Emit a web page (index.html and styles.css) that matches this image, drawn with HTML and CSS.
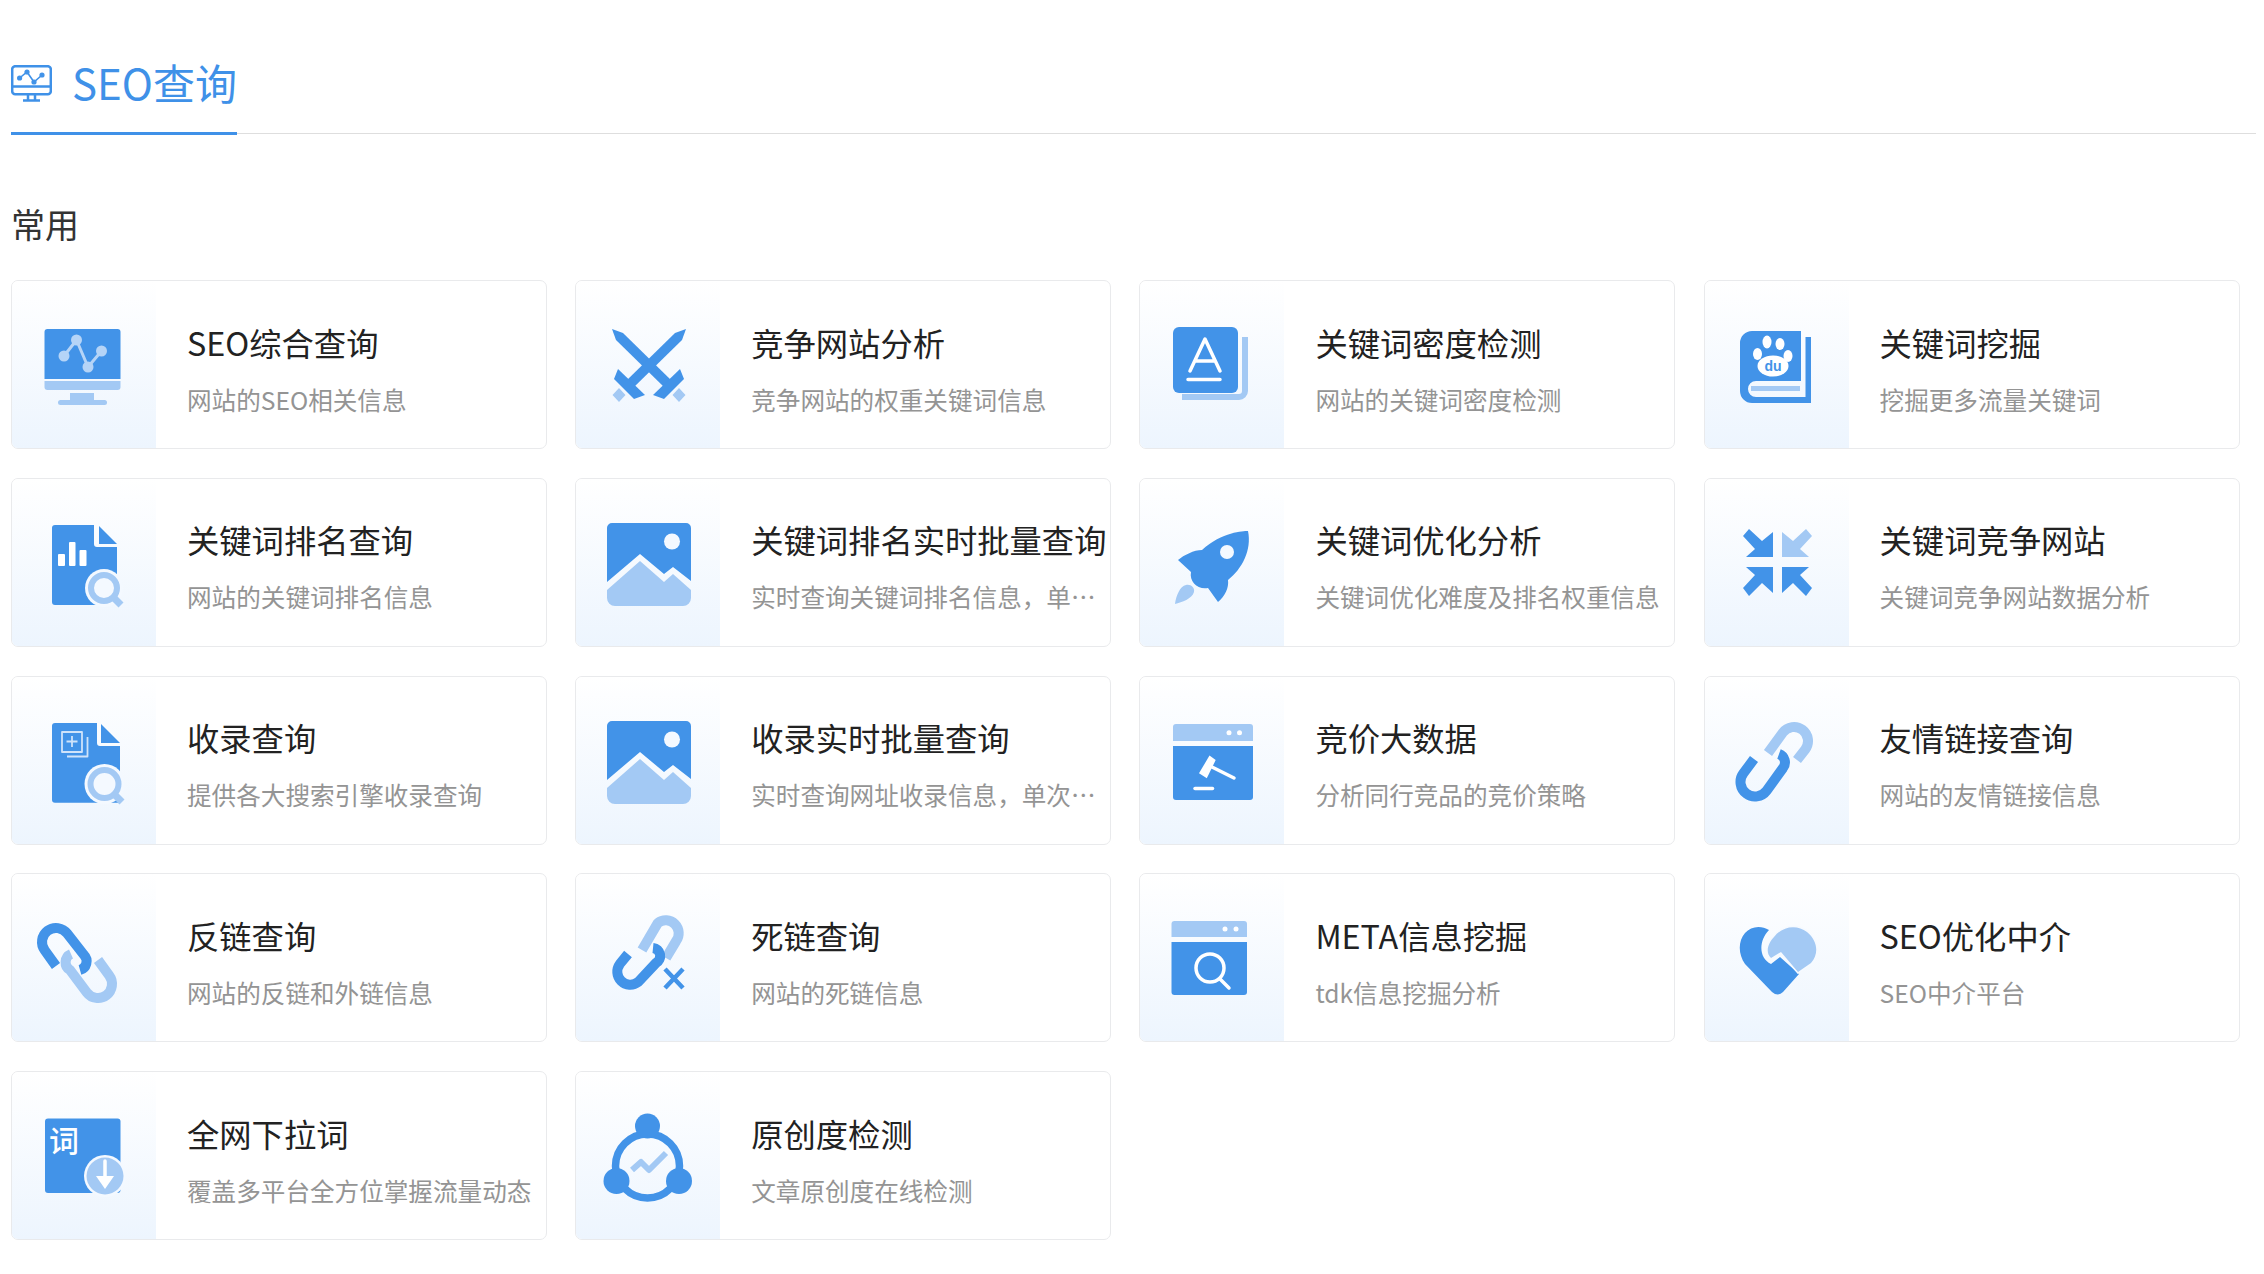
FILE: index.html
```html
<!DOCTYPE html>
<html lang="zh-CN">
<head>
<meta charset="utf-8">
<title>SEO查询</title>
<link rel="stylesheet" href="styles.css">
</head>
<body>
<main class="page">
  <nav class="tabs">
    <a class="tab">
      <svg class="tab-icon" viewBox="0 0 41 37" width="41" height="37">
        <rect x="1.2" y="1.2" width="38.6" height="28" rx="3" class="o"/>
        <path d="M1 21.5H40M17 30v5M24 30v5M12 35.5H29" class="o"/>
        <path d="M8.6 13L16 7L23 17L31 10" class="o thin"/>
        <circle cx="8.6" cy="13" r="2.6" class="b"/><circle cx="16" cy="7" r="2.6" class="b"/><circle cx="23" cy="17" r="2.6" class="b"/><circle cx="31" cy="10" r="2.6" class="b"/>
      </svg>
      <span>SEO查询</span>
    </a>
  </nav>
  <h2 class="section">常用</h2>
  <section class="grid">

    <article class="card">
      <div class="pic"><svg viewBox="0 0 100 100" class="ic">
        <path d="M10.5 17a3 3 0 0 1 3-3h70a3 3 0 0 1 3 3v47h-76z" class="b"/>
        <path d="M10.5 66h76v6a3 3 0 0 1-3 3h-70a3 3 0 0 1-3-3z" class="l"/>
        <path d="M36 78h24v7h-24z" class="l"/><rect x="24" y="85" width="49" height="5" rx="2.5" class="l"/>
        <path d="M30 41L42.500 25L54 52L67.500 36" class="w-line"/>
        <circle cx="30" cy="41" r="5.500" class="l2"/><circle cx="42.500" cy="25" r="5.500" class="l2"/><circle cx="54" cy="52" r="5.500" class="l2"/><circle cx="67.500" cy="36" r="5.500" class="l2"/>
      </svg></div>
      <div class="text"><h3>SEO综合查询</h3><p>网站的SEO相关信息</p></div>
    </article>

    <article class="card">
      <div class="pic"><svg viewBox="0 0 100 100" class="ic">
        <path d="M14 14L25 18L75 67L68 74L18 25Z" class="b"/>
        <path d="M88 14L77 18L27 67L34 74L84 25Z" class="b"/>
        <path d="M82 54L86 64L66 84L55 80Z" class="b"/>
        <path d="M20 54L16 64L36 84L47 80Z" class="b"/>
        <path d="M21 73l6.500 7l-6.500 7l-6.500-7zM81 73l6.500 7l-6.500 7l-6.500-7z" class="l"/>
      </svg></div>
      <div class="text"><h3>竞争网站分析</h3><p>竞争网站的权重关键词信息</p></div>
    </article>

    <article class="card">
      <div class="pic"><svg viewBox="0 0 100 100" class="ic">
        <path d="M83 22V76a6 6 0 0 1-6 6H20" class="s-l" stroke-width="6"/>
        <rect x="11" y="12" width="65" height="66" rx="6" class="b"/>
        <path d="M28 56L43 24L58 56M33 46H53M26 64.500H58" class="s-w"/>
      </svg></div>
      <div class="text"><h3>关键词密度检测</h3><p>网站的关键词密度检测</p></div>
    </article>

    <article class="card">
      <div class="pic"><svg viewBox="0 0 100 100" class="ic">
        <path d="M25 16H74V66H29a6 6 0 0 0 0 16H78.500V22H84V88H25a12 12 0 0 1-12-12V28a12 12 0 0 1 12-12Z" class="b"/>
        <path d="M24 71H73V76H24Z" class="l"/>
        <ellipse cx="40" cy="27" rx="4.500" ry="6.500" class="w"/><ellipse cx="53" cy="29" rx="4.500" ry="6" class="w"/>
        <ellipse cx="30.500" cy="39" rx="4.500" ry="6" class="w"/><ellipse cx="61" cy="41" rx="4.500" ry="6" class="w"/>
        <ellipse cx="46" cy="51" rx="15.500" ry="10.500" class="w"/>
        <text x="46" y="56" class="du">du</text>
      </svg></div>
      <div class="text"><h3>关键词挖掘</h3><p>挖掘更多流量关键词</p></div>
    </article>

    <article class="card">
      <div class="pic"><svg viewBox="0 0 100 100" class="ic">
        <path d="M18 16a3 3 0 0 1 3-3H60V32a3 3 0 0 0 3 3H83V56H46V93H21a3 3 0 0 1-3-3Z" class="b"/>
        <path d="M46 56H83V62L62 93H46Z" class="b"/>
        <path d="M65 14L83 32H65Z" class="b"/>
        <rect x="24" y="42" width="7" height="12" rx="1" class="w"/><rect x="35" y="30" width="6.500" height="24" rx="1" class="w"/><rect x="45.500" y="38" width="7" height="16" rx="1" class="w"/>
        <circle cx="70" cy="76" r="19" class="halo"/>
        <circle cx="70" cy="76" r="13" class="s-l" stroke-width="6"/>
        <path d="M79 85L87 93" class="s-l" stroke-width="7"/>
      </svg></div>
      <div class="text"><h3>关键词排名查询</h3><p>网站的关键词排名信息</p></div>
    </article>

    <article class="card">
      <div class="pic"><svg viewBox="0 0 100 100" class="ic">
        <path d="M9 16a5 5 0 0 1 5-5h74a5 5 0 0 1 5 5V69L75 55L66 62L42 42L9 70Z" class="b"/>
        <path d="M42 49L66 70L75 62L93 78V86a8 8 0 0 1-8 8H17a8 8 0 0 1-8-8V78Z" class="l"/>
        <circle cx="74" cy="29.500" r="8" class="w2"/>
      </svg></div>
      <div class="text"><h3>关键词排名实时批量查询</h3><p>实时查询关键词排名信息，单次最多查询一百个关键词</p></div>
    </article>

    <article class="card">
      <div class="pic"><svg viewBox="0 0 100 100" class="ic">
        <path d="M86 19C86 19 62 18 40 38C32 38 22 43 16 48L29 60C27 70 36 78 46 76L56 90C63 84 67 76 66 68C80 57 90 38 86 19Z" class="b"/>
        <circle cx="65" cy="40" r="7" class="w2"/>
        <path d="M13 92C14 84 18 74 24 73C29 72 33 76 32 80C30 87 20 90 13 92Z" class="l"/>
      </svg></div>
      <div class="text"><h3>关键词优化分析</h3><p>关键词优化难度及排名权重信息</p></div>
    </article>

    <article class="card">
      <div class="pic"><svg viewBox="0 0 100 100" class="ic">
        <path d="M46 20V45H19L28 37L16 24L22 17L35 29Z" class="b"/>
        <path d="M55 20V45H82L73 37L85 24L79 17L66 29Z" class="l"/>
        <path d="M46 81V55H19L28 63L16 76L22 84L35 71Z" class="b"/>
        <path d="M55 81V55H82L73 63L85 76L79 84L66 71Z" class="b"/>
      </svg></div>
      <div class="text"><h3>关键词竞争网站</h3><p>关键词竞争网站数据分析</p></div>
    </article>

    <article class="card">
      <div class="pic"><svg viewBox="0 0 100 100" class="ic">
        <path d="M18 16a3 3 0 0 1 3-3H63V33a3 3 0 0 0 3 3H86V92.700H21a3 3 0 0 1-3-3Z" class="b"/>
        <path d="M67 14L86 33H67Z" class="b"/>
        <rect x="28" y="22" width="20" height="20" class="thin-w"/>
        <path d="M33 46.500H53.500V27M38 26V37M32.500 31.500H43.500" class="thin-w"/>
        <circle cx="70.500" cy="74" r="20" class="halo"/>
        <circle cx="70.500" cy="74" r="14" class="s-l" stroke-width="6"/>
        <path d="M80 84L88 92" class="s-l" stroke-width="7"/>
      </svg></div>
      <div class="text"><h3>收录查询</h3><p>提供各大搜索引擎收录查询</p></div>
    </article>

    <article class="card">
      <div class="pic"><svg viewBox="0 0 100 100" class="ic">
        <path d="M9 16a5 5 0 0 1 5-5h74a5 5 0 0 1 5 5V69L75 55L66 62L42 42L9 70Z" class="b"/>
        <path d="M42 49L66 70L75 62L93 78V86a8 8 0 0 1-8 8H17a8 8 0 0 1-8-8V78Z" class="l"/>
        <circle cx="74" cy="29.500" r="8" class="w2"/>
      </svg></div>
      <div class="text"><h3>收录实时批量查询</h3><p>实时查询网址收录信息，单次最多查询一百个网址</p></div>
    </article>

    <article class="card">
      <div class="pic"><svg viewBox="0 0 100 100" class="ic">
        <path d="M11 17a3 3 0 0 1 3-3h74a3 3 0 0 1 3 3v14h-80z" class="l"/>
        <circle cx="67" cy="22.700" r="2.500" class="w"/><circle cx="77.500" cy="22.700" r="2.500" class="w"/>
        <path d="M11 36h80v51a3 3 0 0 1-3 3h-74a3 3 0 0 1-3-3z" class="b"/>
        <path d="M47.500 45.500L53.700 50L44.800 68.300L37 63.300Z" class="w"/>
        <path d="M50 57L72 68" class="s-w" stroke-width="4.500"/>
        <path d="M33 78.500H50.500" class="s-w" stroke-width="3"/>
      </svg></div>
      <div class="text"><h3>竞价大数据</h3><p>分析同行竞品的竞价策略</p></div>
    </article>

    <article class="card">
      <div class="pic"><svg viewBox="0 0 100 100" class="ic">
        <path d="M41 43L55.800 22.600A14 14 0 0 1 78.200 39.400L70 50" class="s-l link"/>
        <path d="M27 49L16.400 63.300A14.500 14.500 0 0 0 39.600 80.700L56 58A9 9 0 0 0 52 44" class="s-b link"/>
      </svg></div>
      <div class="text"><h3>友情链接查询</h3><p>网站的友情链接信息</p></div>
    </article>

    <article class="card">
      <div class="pic"><svg viewBox="0 0 100 100" class="ic">
        <path d="M37 46A9 9 0 0 0 36 62L52.800 84.400A14 14 0 0 0 75.200 67.600L64 52" class="s-l link"/>
        <path d="M22 58L10.800 42.400A14 14 0 0 1 33.200 25.600L50 47A9 9 0 0 1 46 62" class="s-b link"/>
      </svg></div>
      <div class="text"><h3>反链查询</h3><p>网站的反链和外链信息</p></div>
    </article>

    <article class="card">
      <div class="pic"><svg viewBox="0 0 100 100" class="ic">
        <path d="M44 42L59.900 14.900A13 13 0 0 1 78.100 33.100L68 50" class="s-l link"/>
        <path d="M30 46L21.900 55.900A13 13 0 0 0 40.100 74.100L58 55A8 8 0 0 0 55 40" class="s-b link"/>
        <path d="M67 61L85 80M85 61L67 80" class="s-b" stroke-width="4.500"/>
      </svg></div>
      <div class="text"><h3>死链查询</h3><p>网站的死链信息</p></div>
    </article>

    <article class="card">
      <div class="pic"><svg viewBox="0 0 100 100" class="ic">
        <path d="M9.500 16a3 3 0 0 1 3-3h69.500a3 3 0 0 1 3 3v13h-75.500z" class="l"/>
        <circle cx="63" cy="21" r="2.500" class="w"/><circle cx="74" cy="21" r="2.500" class="w"/>
        <path d="M9.500 34h75.500v50a3 3 0 0 1-3 3h-69.500a3 3 0 0 1-3-3z" class="b"/>
        <circle cx="48" cy="60" r="14" class="s-w" stroke-width="4"/>
        <path d="M58 71L67 80" class="s-w" stroke-width="5"/>
      </svg></div>
      <div class="text"><h3>META信息挖掘</h3><p>tdk信息挖掘分析</p></div>
    </article>

    <article class="card">
      <div class="pic"><svg viewBox="0 0 100 100" class="ic">
        <path d="M42 22C34 17 24 18 18 25C11 33 11 46 18 56L45 84Q51 89 56 84L72 66L53 49L44 56C31 50 32 32 42 22Z" class="b"/>
        <path d="M47 29C55 18 70 16 80 24C91 33 92 46 84 55L71 64L54 44L44 50C38 45 41 35 47 29Z" class="l heart-gap"/>
      </svg></div>
      <div class="text"><h3>SEO优化中介</h3><p>SEO中介平台</p></div>
    </article>

    <article class="card">
      <div class="pic"><svg viewBox="0 0 100 100" class="ic">
        <rect x="11" y="12.500" width="75.500" height="74.500" rx="3" class="b"/>
        <text x="30" y="46" class="ci">词</text>
        <circle cx="71" cy="70" r="21" class="halo"/>
        <circle cx="71" cy="70" r="18.500" class="l"/>
        <path d="M71 55V75" class="s-w" stroke-width="4"/><path d="M62 70H80L71 83Z" class="w"/>
      </svg></div>
      <div class="text"><h3>全网下拉词</h3><p>覆盖多平台全方位掌握流量动态</p></div>
    </article>

    <article class="card">
      <div class="pic"><svg viewBox="0 0 100 100" class="ic">
        <circle cx="49.500" cy="60" r="32" class="s-b" stroke-width="7.500"/>
        <circle cx="49.500" cy="20" r="12.500" class="b"/>
        <circle cx="18.500" cy="75" r="13" class="b"/>
        <circle cx="81" cy="75" r="13" class="b"/>
        <path d="M34 64L43 56L51 64L68 47" class="s-l" stroke-width="6"/>
      </svg></div>
      <div class="text"><h3>原创度检测</h3><p>文章原创度在线检测</p></div>
    </article>

  </section>
</main>
</body>
</html>
```
FILE: styles.css
```css
* { box-sizing: border-box; }
html, body { margin: 0; background: #fff; }
body { font-family: "Noto Sans CJK SC", "Noto Sans", sans-serif; color: #222; }
.page { padding: 0 8px 0 11px; }

.tabs { display: flex; height: 134px; border-bottom: 1px solid #dedede; }
.tab {
  display: flex; align-items: center; gap: 20px; height: 135px;
  padding: 62px 0 30px; border-bottom: 3px solid #3f91e8;
  color: #3f91e8; font-size: 42px; line-height: 40px;
}
.tab-icon { flex: none; margin-top: 3px; }

.section { margin: 68px 0 34px; font-size: 34px; line-height: 44px; font-weight: 400; color: #333; }

.grid { display: grid; grid-template-columns: repeat(4, 536px); grid-auto-rows: 169px; gap: 28.75px 28.2px; }
.card {
  display: flex; overflow: hidden; background: #fff;
  border: 1px solid #e9eaec; border-radius: 7px;
}
.pic {
  flex: none; width: 144px; display: flex; align-items: center; justify-content: center;
  background: linear-gradient(180deg, #fff 0%, #edf5fe 100%);
}
.ic { width: 100px; height: 100px; display: block; }
.text { flex: 1; min-width: 0; padding: 7px 9px 0 31px; display: flex; flex-direction: column; justify-content: center; }
.text h3 { margin: 0; font-size: 32.3px; line-height: 44px; font-weight: 400; color: #222; white-space: nowrap; }
.text p { margin: 17px 0 0; font-size: 24.6px; line-height: 36px; color: #949494; white-space: nowrap; overflow: hidden; text-overflow: ellipsis; }

.b { fill: #4293e8; }
.l { fill: #a3c9f4; }
.l2 { fill: #b5d4f7; }
.w { fill: #fff; }
.w2 { fill: #f4f9ff; }
.o { fill: none; stroke: #3f91e8; stroke-width: 2.5; }
.thin { stroke-width: 1.6; }
.s-l, .s-b, .s-w, .w-line, .thin-w { fill: none; stroke-linejoin: round; }
.s-l { stroke: #a3c9f4; }
.s-b { stroke: #4293e8; }
.s-w { stroke: #fff; stroke-width: 3.5; stroke-linecap: round; }
.w-line { stroke: #b5d4f7; stroke-width: 3; }
.thin-w { stroke: #cfe3fa; stroke-width: 1.8; }
.link { stroke-width: 10; }
.heart-gap { stroke: #f6faff; stroke-width: 3; paint-order: stroke; }
.halo { fill: #f4f9ff; }
.du { font-size: 14px; font-weight: 700; fill: #4293e8; text-anchor: middle; font-family: "Liberation Sans", sans-serif; }
.ci { font-size: 30px; font-weight: 500; fill: #fff; text-anchor: middle; font-family: "Noto Sans CJK SC", sans-serif; }
```
